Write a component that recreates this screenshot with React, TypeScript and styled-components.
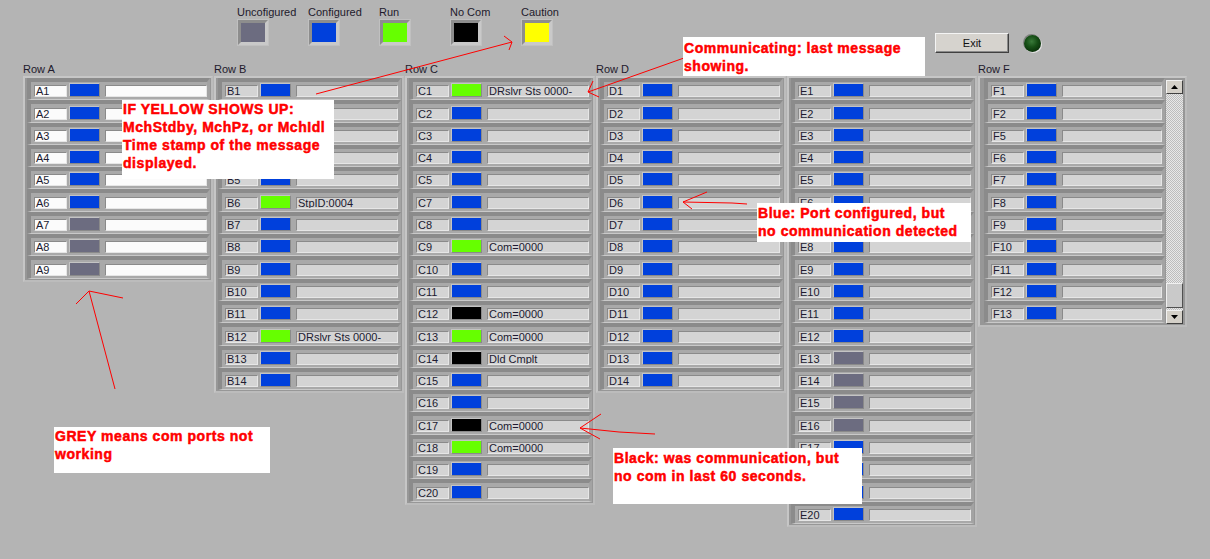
import React from 'react';
import styled, { createGlobalStyle } from 'styled-components';

const BLUE = '#0040dc';
const GREEN = '#66ff00';
const GREY = '#6c6c80';
const BLACK = '#000000';
const YELLOW = '#ffff00';

type Port = { id: string; color: string; text?: string };
type Bank = { title: string; ports: Port[]; light?: boolean; scroll?: boolean };

const mk = (prefix: string, nums: number[], color: (n: number) => string, texts: Record<number, string> = {}): Port[] =>
  nums.map((n) => ({ id: `${prefix}${n}`, color: color(n), text: texts[n] }));

const range = (a: number, b: number) => Array.from({ length: b - a + 1 }, (_, i) => a + i);

const banks: Bank[] = [
  { title: 'Row A', light: true, ports: mk('A', range(1, 9), (n) => (n <= 6 ? BLUE : GREY)) },
  {
    title: 'Row B',
    ports: mk('B', range(1, 14), (n) => (n === 6 || n === 12 ? GREEN : BLUE), {
      6: 'StpID:0004',
      12: 'DRslvr Sts 0000-',
    }),
  },
  {
    title: 'Row C',
    ports: mk(
      'C',
      [1, 2, 3, 4, 5, 7, 8, 9, 10, 11, 12, 13, 14, 15, 16, 17, 18, 19, 20],
      (n) => ([1, 9, 13, 18].includes(n) ? GREEN : [12, 14, 17].includes(n) ? BLACK : BLUE),
      { 1: 'DRslvr Sts 0000-', 9: 'Com=0000', 12: 'Com=0000', 13: 'Com=0000', 14: 'Dld Cmplt', 17: 'Com=0000', 18: 'Com=0000' }
    ),
  },
  { title: 'Row D', ports: mk('D', range(1, 14), () => BLUE) },
  { title: 'Row E', ports: mk('E', range(1, 20), (n) => (n >= 13 && n <= 16 ? GREY : BLUE)) },
  { title: 'Row F', scroll: true, ports: mk('F', [1, 2, 5, 6, 7, 8, 9, 10, 11, 12, 13], () => BLUE) },
];

const legend = [
  { label: 'Uncofigured', color: GREY },
  { label: 'Configured', color: BLUE },
  { label: 'Run', color: GREEN },
  { label: 'No Com', color: BLACK },
  { label: 'Caution', color: YELLOW },
];

const GlobalStyle = createGlobalStyle`
  html, body { margin: 0; padding: 0; background: #b4b4b4; }
  body { font-family: "Liberation Sans", Arial, sans-serif; }
`;

const Page = styled.div`
  position: relative;
  width: 1210px;
  height: 559px;
  overflow: hidden;
  background: #b4b4b4;
  font-family: "Liberation Sans", Arial, sans-serif;
  color: #1e1a2c;
`;

const Header = styled.div`
  display: flex;
  height: 62px;
`;

const Legend = styled.div`
  display: flex;
  padding: 6px 0 0 237px;
`;

const LegendItem = styled.div`
  width: 71px;
  display: flex;
  flex-direction: column;
  align-items: flex-start;
`;

const SmallLabel = styled.span`
  font-size: 11px;
  line-height: 13px;
  height: 13px;
  white-space: nowrap;
`;

const Swatch = styled.div<{ $color: string }>`
  box-sizing: border-box;
  width: 30px;
  height: 25px;
  margin: 1px 0 0 1px;
  border: 3px solid;
  border-color: #8d8d8d #c9c9c9 #c9c9c9 #8d8d8d;
  outline: 1px solid #c0c0c0;
  background: ${(p) => p.$color};
`;

const Controls = styled.div`
  display: flex;
  align-items: center;
  gap: 15px;
  height: 20px;
  margin: 33px 169px 0 auto;
`;

const ExitButton = styled.button`
  box-sizing: border-box;
  width: 74px;
  height: 20px;
  padding: 0;
  background: #d6d3ce;
  border: 1px solid;
  border-color: #f4f4f4 #404040 #404040 #f4f4f4;
  box-shadow: inset -1px -1px 0 #8a8a8a;
  font: 11px "Liberation Sans", Arial, sans-serif;
  color: #111;
`;

const Led = styled.div`
  width: 17px;
  height: 17px;
  border-radius: 50%;
  background: radial-gradient(circle at 45% 38%, #3a7a3a 0%, #175017 40%, #062806 85%);
  box-shadow: 1px 1px 0 #e4e4e4, -1px -1px 0 #808080;
`;

const Board = styled.div`
  display: flex;
  align-items: flex-start;
  padding-left: 23px;
`;

const Column = styled.div<{ $wide?: boolean }>`
  width: ${(p) => (p.$wide ? 209 : 191)}px;
  display: flex;
  flex-direction: column;
`;

const ColumnTitle = styled.div`
  font-size: 11px;
  line-height: 14px;
  height: 14px;
  white-space: nowrap;
`;

const Panel = styled.div<{ $wide?: boolean }>`
  box-sizing: border-box;
  width: ${(p) => (p.$wide ? 209 : 190)}px;
  display: flex;
  align-items: flex-start;
  border: 2px solid;
  border-color: #c6c6c6 #bcbcbc #bcbcbc #c6c6c6;
  padding: 0 ${(p) => (p.$wide ? 2 : 1)}px 1px ${(p) => (p.$wide ? 4 : 2)}px;
  background: #979797;
`;

const RowList = styled.div`
  flex: 1;
  min-width: 0;
  display: flex;
  flex-direction: column;
`;

const RowBox = styled.div`
  box-sizing: border-box;
  height: 22.3px;
  display: flex;
  align-items: flex-end;
  padding: 0 0 2px 3px;
  border-style: solid;
  border-width: 4px 3px 1px 4px;
  border-color: #8b8b8b #a3a3a3 #c9c9c9 #8b8b8b;
  background: #a9a9a9;
`;

const Field = styled.div<{ $light?: boolean }>`
  box-sizing: border-box;
  height: 12px;
  border: 1px solid;
  border-color: #8a8a8a #e6e6e6 #e6e6e6 #8a8a8a;
  background: ${(p) => (p.$light ? '#fbfbfb' : '#d4d4d4')};
  font-size: 11px;
  line-height: 11px;
  padding-left: 1px;
  white-space: nowrap;
  overflow: hidden;
  color: #201a30;
`;

const IdField = styled(Field)`
  width: 33px;
  flex: none;
`;

const MsgField = styled(Field)`
  flex: 1;
  margin-left: 5px;
`;

const StatusBox = styled.div<{ $color: string }>`
  box-sizing: border-box;
  width: 31px;
  height: 14px;
  flex: none;
  margin-left: 2px;
  border: 1px solid;
  border-color: #c4c4c4 #8a8a8a #8a8a8a #c4c4c4;
  background: ${(p) => p.$color};
`;

const ScrollBar = styled.div`
  width: 17px;
  height: 244px;
  margin: 2px 0 0 1px;
  display: flex;
  flex-direction: column;
`;

const ScrollButton = styled.div`
  box-sizing: border-box;
  height: 14px;
  display: flex;
  align-items: center;
  justify-content: center;
  background: #d4d0c8;
  border: 1px solid;
  border-color: #f2f2f2 #404040 #404040 #f2f2f2;
`;

const Track = styled.div<{ $grow: number }>`
  flex: ${(p) => p.$grow};
  background: repeating-conic-gradient(#e8e8e8 0 25%, #bdbdbd 0 50%) 0 0 / 2px 2px;
`;

const Thumb = styled.div`
  box-sizing: border-box;
  height: 25px;
  background: #c9c9c9;
  border: 1px solid;
  border-color: #f0f0f0 #505050 #505050 #f0f0f0;
`;

const Note = styled.div<{ $x: number; $y: number; $w: number; $h: number; $pt: number }>`
  position: absolute;
  left: ${(p) => p.$x}px;
  top: ${(p) => p.$y}px;
  width: ${(p) => p.$w}px;
  height: ${(p) => p.$h}px;
  box-sizing: border-box;
  padding: ${(p) => p.$pt}px 0 0 1px;
  background: #ffffff;
  color: #ff0000;
  font: bold 14px/18px "Liberation Sans", Arial, sans-serif;
  letter-spacing: 0.55px;
  -webkit-text-stroke: 0.5px #ff0000;
  white-space: nowrap;
  overflow: hidden;
  z-index: 3;
`;

const Arrows = styled.svg`
  position: absolute;
  left: 0;
  top: 0;
  z-index: 2;
  pointer-events: none;
`;

const Tri = ({ up }: { up?: boolean }) => (
  <svg width="7" height="4" viewBox="0 0 7 4">
    <polygon points={up ? '0,4 7,4 3.5,0' : '0,0 7,0 3.5,4'} fill="#000" />
  </svg>
);

const PortRow = ({ port, light }: { port: Port; light?: boolean }) => (
  <RowBox>
    <IdField $light={light}>{port.id}</IdField>
    <StatusBox $color={port.color} />
    <MsgField $light={light}>{port.text ?? ''}</MsgField>
  </RowBox>
);

export default function App() {
  return (
    <Page>
      <GlobalStyle />
      <Header>
        <Legend>
          {legend.map((l) => (
            <LegendItem key={l.label}>
              <SmallLabel>{l.label}</SmallLabel>
              <Swatch $color={l.color} />
            </LegendItem>
          ))}
        </Legend>
        <Controls>
          <ExitButton>Exit</ExitButton>
          <Led />
        </Controls>
      </Header>
      <Board>
        {banks.map((b) => (
          <Column key={b.title} $wide={b.scroll}>
            <ColumnTitle>{b.title}</ColumnTitle>
            <Panel $wide={b.scroll}>
              <RowList>
                {b.ports.map((p) => (
                  <PortRow key={p.id} port={p} light={b.light} />
                ))}
              </RowList>
              {b.scroll && (
                <ScrollBar>
                  <ScrollButton>
                    <Tri up />
                  </ScrollButton>
                  <Track $grow={189} />
                  <Thumb />
                  <Track $grow={2} />
                  <ScrollButton>
                    <Tri />
                  </ScrollButton>
                </ScrollBar>
              )}
            </Panel>
          </Column>
        ))}
      </Board>

      <Arrows width="1210" height="559" viewBox="0 0 1210 559">
        <g stroke="#ff0000" strokeWidth="1" fill="none">
          <path d="M316 94 L512 42 M504 36 L512 42 L509 50" />
          <path d="M684 58 L588 92 M593 81 L588 92 L599 97" />
          <path d="M683 202 L732 203 L747 204 M707 192 L683 202 L692 209" />
          <path d="M115 389 L89 291 M76 304 L89 291 L123 298" />
          <path d="M655 434 L619 432 L580 428 M601 414 L580 428 L600 439" />
        </g>
      </Arrows>

      <Note $x={122} $y={100} $w={212} $h={79} $pt={0}>
        IF YELLOW SHOWS UP:
        <br />
        MchStdby, MchPz, or MchIdl
        <br />
        Time stamp of the message
        <br />
        displayed.
      </Note>
      <Note $x={683} $y={37} $w={242} $h={39} $pt={2}>
        Communicating: last message
        <br />
        showing.
      </Note>
      <Note $x={757} $y={203} $w={214} $h={39} $pt={1}>
        Blue: Port configured, but
        <br />
        no communication detected
      </Note>
      <Note $x={54} $y={427} $w={216} $h={46} $pt={0}>
        GREY means com ports not
        <br />
        working
      </Note>
      <Note $x={613} $y={448} $w={249} $h={56} $pt={1}>
        Black: was communication, but
        <br />
        no com in last 60 seconds.
      </Note>
    </Page>
  );
}
